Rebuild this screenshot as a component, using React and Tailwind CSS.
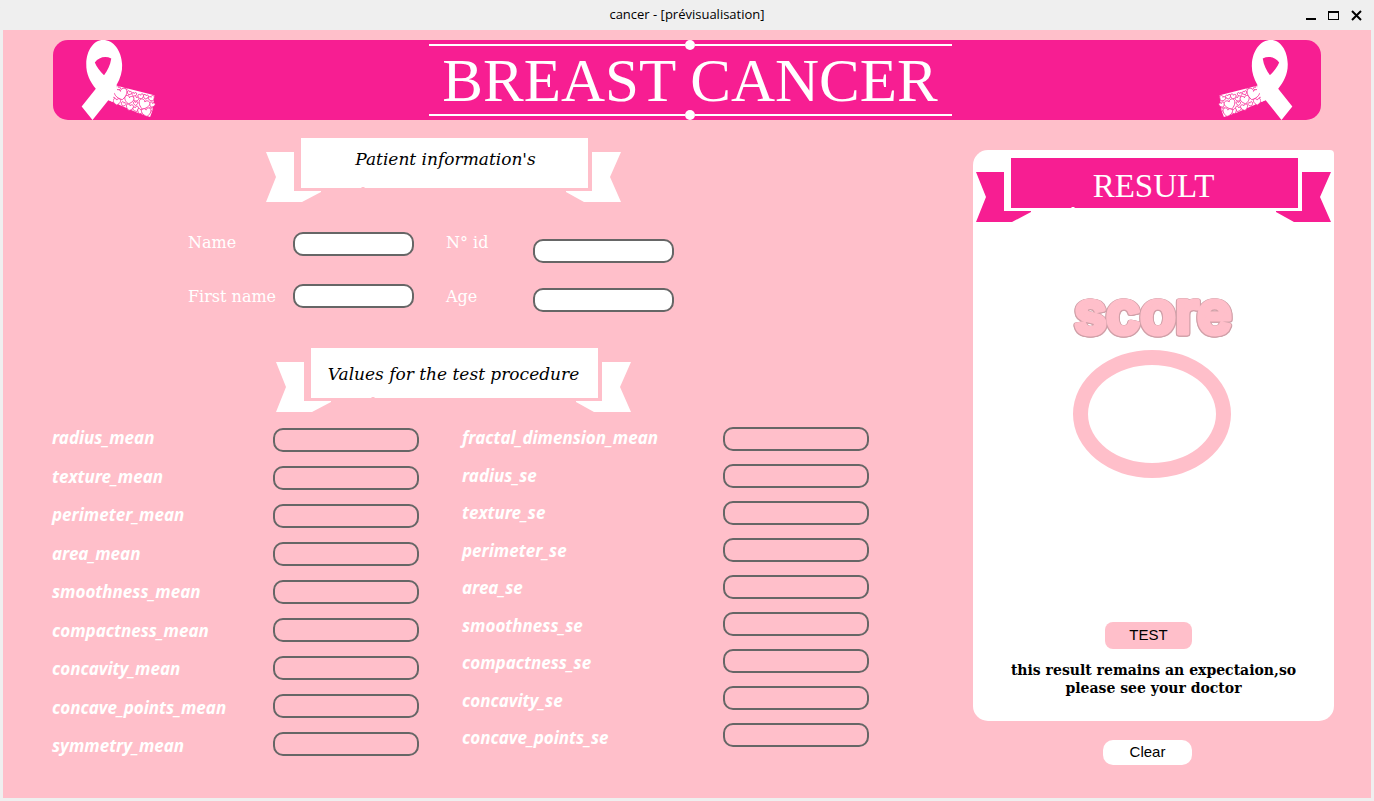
import React from "react";

const meanFeatures = [
  "radius_mean",
  "texture_mean",
  "perimeter_mean",
  "area_mean",
  "smoothness_mean",
  "compactness_mean",
  "concavity_mean",
  "concave_points_mean",
  "symmetry_mean",
];

const seFeatures = [
  "fractal_dimension_mean",
  "radius_se",
  "texture_se",
  "perimeter_se",
  "area_se",
  "smoothness_se",
  "compactness_se",
  "concavity_se",
  "concave_points_se",
];

// x, y, size, rotation of every heart on the ribbon's tail
const hearts = [
  [232, 175, 14, 30],
  [216, 208, 14, 0],
  [255, 178, 10, 0],
  [267, 189, 13, 20],
  [282, 194, 14, 0],
  [286, 207, 17, 30],
  [302, 200, 17, -10],
  [317, 201, 15, 15],
  [335, 206, 18, -25],
  [336, 225, 17, 20],
  [286, 221, 13, 0],
  [249, 223, 14, 25],
  [229, 216, 22, 0],
  [268, 233, 21, 14],
  [287, 238, 17, -20],
  [300, 245, 17, 15],
  [333, 239, 12, 0],
  [319, 248, 28, -8],
  [266, 210, 27, 12],
  [311, 224, 32, 20],
  [242, 193, 37, -12],
];

function AwarenessRibbon({ className }) {
  return (
    <svg viewBox="120 28 231 243" className={className} fill="#fff" aria-hidden="true">
      <path d="M226 166L256 174L343 196L338 240L330 262L290 248L206 212Z" />
      {hearts.map(([x, y, s, r], i) => (
        <g key={i} transform={`translate(${x} ${y}) rotate(${r}) scale(${s / 20})`}>
          <path
            vectorEffect="non-scaling-stroke"
            stroke="#f71e92"
            strokeWidth="0.8"
            d="M0 9C-12 3-13-8-6-9C-2-9 0-7 0-5C0-7 2-9 6-9C13-8 12 3 0 9Z"
          />
        </g>
      ))}
      <path
        fillRule="evenodd"
        d="M187 28C158 28 137 60 136 100C135 132 149 156 165 176L122 230L155 271L203 211L217 216L219 192L230 182L228 165C240 143 246 124 245 103C243 60 219 28 187 28ZM162 96C174 80 194 75 212 84C209 105 200 121 190 135C178 122 167 110 162 96Z"
      />
    </svg>
  );
}

function RibbonTitle({ id, children, fill, className }) {
  return (
    <div className="grid w-[355px]">
      <svg viewBox="0 0 355 64" className={`col-start-1 row-start-1 w-full ${fill}`} aria-hidden="true">
        <path d="M35 0H322V50H99L98 49H96L95 50H35Z" />
        <path d="M0 14H28V53H55V54L36 64H0L10 39Z" />
        <path d="M326 14H355L344 39L355 64H318L300 54V53H326Z" />
      </svg>
      <h2 id={id} className={`col-start-1 row-start-1 text-center ${className}`}>
        {children}
      </h2>
    </div>
  );
}

function Field({ id, className }) {
  return (
    <input
      id={id}
      type="text"
      className={`h-6 w-full rounded-[10px] border-2 border-[#666] px-2 text-sm text-black outline-none ${className}`}
    />
  );
}

function FeatureLabels({ names, className }) {
  return (
    <div className={`flex flex-col justify-between ${className}`}>
      {names.map((name) => (
        <label
          key={name}
          htmlFor={name}
          className="font-['Noto_Sans','Open_Sans',sans-serif] text-[17px] leading-6 font-bold text-white italic"
        >
          {name}
        </label>
      ))}
    </div>
  );
}

function TitleBar() {
  return (
    <header className="grid h-[30px] grid-cols-[1fr_auto_1fr] items-center rounded-t-lg bg-[#efefef]">
      <h1 className="col-start-2 font-['Open_Sans','Noto_Sans',sans-serif] text-[13px] text-black">
        cancer - [prévisualisation]
      </h1>
      <div className="flex items-center justify-end gap-3 pr-3">
        <button type="button" aria-label="Minimize">
          <svg viewBox="0 0 10 12" className="h-3 w-[10px]">
            <path d="M0 9H10V11H0Z" />
          </svg>
        </button>
        <button type="button" aria-label="Maximize">
          <svg viewBox="0 0 11 12" className="h-3 w-[11px]">
            <path fillRule="evenodd" d="M0 2H11V11H0ZM1 4V10H10V4Z" />
          </svg>
        </button>
        <button type="button" aria-label="Close">
          <svg viewBox="0 0 11 12" className="h-3 w-[11px]" fill="none" stroke="#000" strokeWidth="2">
            <path d="M1 2L10 11M10 2L1 11" />
          </svg>
        </button>
      </div>
    </header>
  );
}

function Rule() {
  return (
    <div className="flex h-[10px] w-full items-center">
      <span className="h-[2px] flex-1 bg-white" />
      <span className="size-[10px] rounded-full bg-white" />
      <span className="h-[2px] flex-1 bg-white" />
    </div>
  );
}

function Banner() {
  return (
    <div className="mx-[50px] flex h-20 items-center justify-between rounded-[15px] bg-[#f71e92] px-7">
      <AwarenessRibbon className="h-20 w-[76px]" />
      <div className="ml-[6px] flex h-20 w-[523px] flex-col items-center justify-between">
        <Rule />
        <p className="pt-px font-['Liberation_Serif',serif] text-[61px] leading-[59px] text-white">BREAST CANCER</p>
        <Rule />
      </div>
      <AwarenessRibbon className="h-20 w-[76px] -scale-x-100" />
    </div>
  );
}

function ScoreHeading() {
  return (
    <svg
      viewBox="0 0 200 90"
      className="mt-[47px] h-[90px] w-[200px] [filter:drop-shadow(1px_0_0_#d0a0a8)_drop-shadow(-1px_0_0_#d0a0a8)_drop-shadow(0_1px_0_#d0a0a8)]"
      role="img"
      aria-label="score"
    >
      <text
        x="99"
        y="64"
        textAnchor="middle"
        strokeWidth="5"
        strokeLinejoin="round"
        className="fill-[#ffbfca] stroke-[#ffbfca] font-['Inter',sans-serif] text-[58px] font-semibold"
      >
        score
      </text>
    </svg>
  );
}

const patientLabel = "font-['DejaVu_Serif',serif] text-base leading-[22px] text-white";

export default function App() {
  return (
    <div className="flex min-h-screen flex-col bg-[#efefef]">
      <TitleBar />
      <main className="mx-[3px] mb-[3px] flex-1 bg-[#ffbfca] pt-[10px]">
        <Banner />
        <div className="flex items-start justify-between pr-[37px]">
          <form className="pt-[18px]">
            <section aria-labelledby="patient">
              <div className="pl-[263px]">
                <RibbonTitle
                  id="patient"
                  fill="fill-white"
                  className="pt-[9px] pl-1 font-['DejaVu_Serif',serif] text-[17px] leading-6 text-black italic"
                >
                  Patient information's
                </RibbonTitle>
              </div>
              <div className="mt-[30px] grid grid-cols-[105px_121px_119px_141px] pl-[185px]">
                <div className="flex flex-col gap-8">
                  <label htmlFor="name" className={patientLabel}>Name</label>
                  <label htmlFor="first-name" className={patientLabel}>First name</label>
                </div>
                <div className="flex flex-col gap-7">
                  <Field id="name" className="bg-white" />
                  <Field id="first-name" className="bg-white" />
                </div>
                <div className="flex flex-col gap-8 pl-8">
                  <label htmlFor="patient-id" className={patientLabel}>N° id</label>
                  <label htmlFor="age" className={patientLabel}>Age</label>
                </div>
                <div className="flex flex-col gap-[25px] pt-[7px]">
                  <Field id="patient-id" className="bg-white" />
                  <Field id="age" className="bg-white" />
                </div>
              </div>
            </section>

            <section aria-labelledby="values" className="mt-9">
              <div className="pl-[273px]">
                <RibbonTitle
                  id="values"
                  fill="fill-white"
                  className="pt-[14px] font-['DejaVu_Serif',serif] text-[17px] leading-6 text-black italic"
                >
                  Values for the test procedure
                </RibbonTitle>
              </div>
              <div className="mt-[14px] flex items-start pl-[49px]">
                <FeatureLabels names={meanFeatures} className="h-[332px] w-[221px]" />
                <div className="mt-[2px] flex w-[146px] flex-col gap-[14px]">
                  {meanFeatures.map((name) => (
                    <Field key={name} id={name} className="bg-transparent" />
                  ))}
                </div>
                <FeatureLabels names={seFeatures} className="ml-[43px] h-[324px] w-[261px]" />
                <div className="mt-px flex w-[146px] flex-col gap-[13px]">
                  {seFeatures.map((name) => (
                    <Field key={name} id={name} className="bg-transparent" />
                  ))}
                </div>
              </div>
            </section>
          </form>

          <aside className="flex w-[361px] flex-col items-center pt-[30px]">
            <section
              aria-labelledby="result"
              className="flex w-full flex-col items-center rounded-[15px] rounded-tr-[4px] bg-white pt-2 pb-6"
            >
              <RibbonTitle
                id="result"
                fill="fill-[#f71e92]"
                className="pt-[8px] font-['Liberation_Serif',serif] text-[33px] leading-10 text-white"
              >
                RESULT
              </RibbonTitle>
              <ScoreHeading />
              <output
                aria-label="score"
                className="-mt-[9px] mr-[3px] block h-32 w-[158px] rounded-[50%] border-[15px] border-[#ffbfca]"
              />
              <button
                type="button"
                className="mt-36 mr-[10px] h-[27px] w-[87px] rounded-lg bg-[#ffbfca] font-['Liberation_Sans',sans-serif] text-[15px] text-black"
              >
                TEST
              </button>
              <p className="mt-3 text-center font-['DejaVu_Serif',serif] text-sm leading-[18px] font-bold text-black">
                this result remains an expectaion,so
                <br />
                please see your doctor
              </p>
            </section>
            <button
              type="button"
              className="mt-[19px] mr-[12px] h-[25px] w-[89px] rounded-[10px] bg-white font-['Liberation_Sans',sans-serif] text-[15px] text-black"
            >
              Clear
            </button>
          </aside>
        </div>
      </main>
    </div>
  );
}
